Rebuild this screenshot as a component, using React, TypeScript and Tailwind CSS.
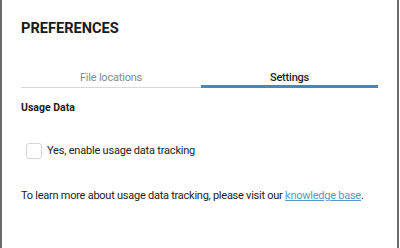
export default function App() {
  return (
    <div
      className="w-[399px] h-[248px] bg-white border-l-2 border-r-2 border-[#6b6b6b] flex flex-col text-[#222]"
      style={{ fontFamily: "Roboto, 'Liberation Sans', sans-serif" }}
    >
      <div className="pl-[19px] pr-[19px] flex flex-col">
        <h1 className="mt-[19px] text-[14.6px] leading-[18px] font-bold text-[#1a1a1a]">PREFERENCES</h1>
        <div className="mt-[34px] flex">
          <div className="w-[178px] flex flex-col items-center">
            <span className="text-[11px] leading-[13px] tracking-[-0.2px] text-[#8a8a8a] pl-[3px]">File locations</span>
            <div className="mt-[1px] w-full h-[3px] flex flex-col justify-end">
              <div className="h-px bg-[#d8d8d8]" />
            </div>
          </div>
          <div className="w-[3px] flex flex-col justify-end"><div className="h-px bg-[#d8d8d8]" /></div>
          <div className="w-[178px] flex flex-col items-center">
            <span className="text-[11px] leading-[13px] tracking-[-0.2px] font-medium text-[#1e1e1e]">Settings</span>
            <div className="mt-[1px] w-full h-[3px] bg-[#4f86b0]" />
          </div>
        </div>
        <div className="mt-[13px] text-[10.5px] leading-[13px] font-bold">Usage Data</div>
        <div className="mt-[29px] flex items-center pl-[5px]">
          <div className="w-[16px] h-[16px] rounded-[3px] border border-[#d6d6d6] bg-white" />
          <span className="ml-[5px] text-[11px] leading-[14px] tracking-[-0.2px] text-[#222]">Yes, enable usage data tracking</span>
        </div>
        <p className="mt-[30px] text-[11px] leading-[14px] tracking-[-0.25px] text-[#1e1e1e] whitespace-nowrap">
          To learn more about usage data tracking, please visit our{" "}
          <a className="text-[#5b9bc8] underline">knowledge base</a>.
        </p>
      </div>
    </div>
  );
}
